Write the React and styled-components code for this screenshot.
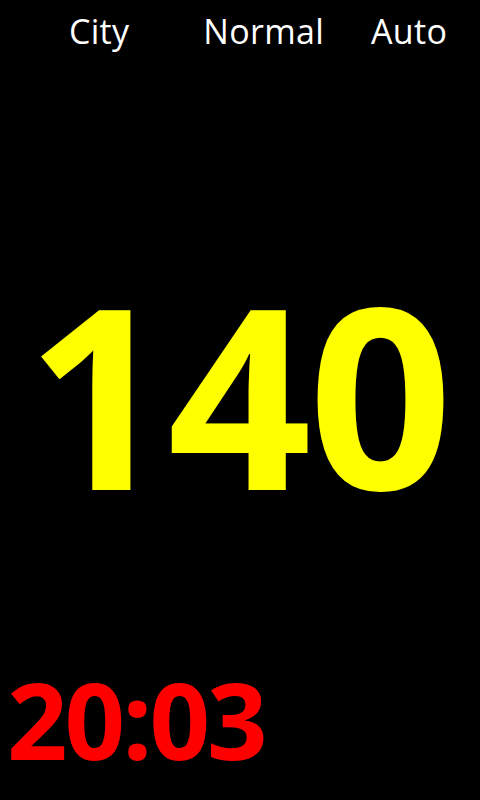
import React from "react";
import styled, { createGlobalStyle } from "styled-components";

const Global = createGlobalStyle`
  html, body { margin: 0; padding: 0; background: #000; }
  body { font-family: "Open Sans", "DejaVu Sans", sans-serif; }
`;

const Screen = styled.div`
  width: 480px;
  height: 800px;
  background: #000;
  display: flex;
  flex-direction: column;
  overflow: hidden;
`;

const TopBar = styled.div`
  display: flex;
  align-items: baseline;
  height: 62px;
  padding-left: 69px;
`;

const Mode = styled.span`
  color: #fff;
  font-size: 34px;
  line-height: 62px;
  margin-left: ${(p) => p.$gap || 0}px;
  letter-spacing: 0.3px;
`;

const Center = styled.div`
  flex: 1;
  display: flex;
  align-items: center;
  justify-content: center;
`;

const Speed = styled.div`
  color: #ffff00;
  font-weight: 700;
  font-size: 252px;
  line-height: 1;
  letter-spacing: -3px;
  margin-top: 58px;
  margin-right: 4px;
`;

const Clock = styled.div`
  color: #ff0000;
  font-weight: 700;
  font-size: 106px;
  line-height: 1;
  padding-left: 7px;
  height: 134px;
  letter-spacing: -3px;
`;

export default function App() {
  return (
    <>
      <Global />
      <Screen>
        <TopBar>
          <Mode>City</Mode>
          <Mode $gap={74}>Normal</Mode>
          <Mode $gap={47}>Auto</Mode>
        </TopBar>
        <Center>
          <Speed>140</Speed>
        </Center>
        <Clock>20:03</Clock>
      </Screen>
    </>
  );
}
